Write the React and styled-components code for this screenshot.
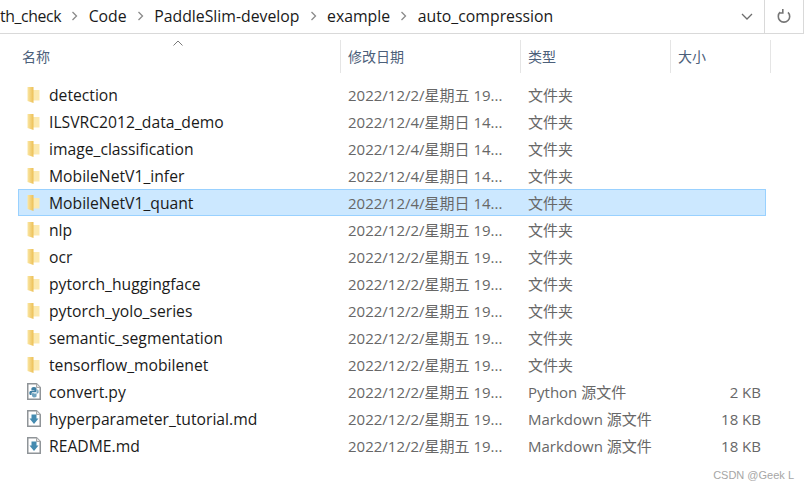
import React from 'react';
import styled, { createGlobalStyle } from 'styled-components';

const GlobalStyle = createGlobalStyle`
  html, body { margin: 0; padding: 0; background: #fff; }
  body { width: 808px; height: 488px; overflow: hidden; font-family: "Open Sans", "Noto Sans CJK SC", sans-serif; }
`;

const Page = styled.div`
  position: relative;
  width: 808px;
  height: 488px;
  background: #fff;
  overflow: hidden;
`;

const AddressBar = styled.div`
  display: flex;
  align-items: stretch;
  width: 804px;
  height: 34px;
  box-sizing: border-box;
  border-bottom: 1px solid #d9d9d9;
  border-right: 1px solid #d9d9d9;
`;

const Crumbs = styled.div`
  flex: 1;
  display: flex;
  align-items: center;
  overflow: hidden;
  padding-bottom: 2px;
  font-size: 15.8px;
  color: #1a1a1a;
  white-space: nowrap;
`;

const Crumb = styled.span`
  &:first-child { letter-spacing: -0.4px; }
`;

const CrumbArrow = styled.svg`
  flex: none;
  width: 7px;
  height: 10px;
  margin: 0 10.3px;
  fill: none;
  stroke: #8a8a8a;
  stroke-width: 1.3;
`;

const DropButton = styled.div`
  width: 39px;
  padding-left: 4px;
  box-sizing: border-box;
  display: flex;
  align-items: center;
  justify-content: center;
  svg { width: 12px; height: 7px; fill: none; stroke: #6d6d6d; stroke-width: 1.3; }
`;

const RefreshButton = styled.div`
  width: 38px;
  padding-bottom: 2px;
  display: flex;
  align-items: center;
  justify-content: center;
  border-left: 1px solid #d9d9d9;
  svg { width: 16px; height: 16px; fill: none; stroke: #757575; stroke-width: 1.6; }
`;

const HeaderRow = styled.div`
  position: relative;
  display: grid;
  grid-template-columns: 323px 180px 150px 100px;
  margin: 6px 0 0 18px;
  width: 753px;
  height: 33px;
`;

const HeaderCell = styled.div`
  display: flex;
  align-items: center;
  padding: 0 0 1px ${p => p.$pad || 7}px;
  box-sizing: border-box;
  border-right: 1px solid #e5e5e5;
  font-size: 14px;
  color: #4c607a;
`;

const SortArrow = styled.svg`
  position: absolute;
  left: 154px;
  top: 0;
  width: 12px;
  height: 6px;
  fill: none;
  stroke: #7a7a7a;
  stroke-width: 1;
`;

const List = styled.div`
  margin: 8px 0 0 18px;
  width: 748px;
`;

const Row = styled.div`
  display: grid;
  grid-template-columns: 323px 180px 150px 1fr;
  align-items: center;
  height: 27px;
  box-sizing: border-box;
  font-size: 15px;
  background: ${p => (p.$selected ? '#cce8ff' : 'transparent')};
  box-shadow: ${p => (p.$selected ? 'inset 0 0 0 1px #99d1ff' : 'none')};
`;

const NameCell = styled.div`
  display: flex;
  align-items: center;
  gap: 9px;
  padding-left: 9px;
  font-size: 15.7px;
  color: #1a1a1a;
`;

const InfoCell = styled.div`
  padding-left: 7px;
  color: #676767;
  white-space: nowrap;
`;

const SizeCell = styled.div`
  padding-right: 5px;
  text-align: right;
  color: #676767;
  white-space: nowrap;
`;

const Watermark = styled.div`
  position: absolute;
  right: 14px;
  bottom: 7px;
  font-family: "Liberation Sans", sans-serif;
  font-size: 11px;
  color: #a6a6a6;
`;

const FileSvg = styled.svg`
  margin-right: -1px;
`;

const FolderIcon = () => (
  <svg width="13" height="18" viewBox="0 0 13 18">
    <defs>
      <linearGradient id="flap" x1="0" x2="1" y1="0" y2="0">
        <stop offset="0" stopColor="#fbe6a2" />
        <stop offset="1" stopColor="#ecbf55" />
      </linearGradient>
    </defs>
    <path d="M5 4 L12.5 4 L12.5 14.5 L5 14.5 Z" fill="#fce9ae" />
    <path d="M0.5 1 L6.5 1 L6.5 17 L0.5 15 Z" fill="url(#flap)" />
  </svg>
);

const FileIcon = ({ kind }) => (
  <FileSvg width="14" height="17" viewBox="0 0 14 17">
    <path d="M0.75 0.75 H9.5 L13.25 4.5 V16.25 H0.75 Z" fill="#fff" stroke="#8f9498" strokeWidth="1.5" />
    <path d="M9.5 0.75 V4.5 H13.25" fill="#e4e4e4" stroke="#a8a8a8" />
    {kind === 'py' ? (
      <>
        <path d="M7 4 C4.6 4 4.4 5 4.4 6 V7.4 H7.4 V8 H3.4 C2 8 2 12 3.4 12 H4.6 V10.4 C4.6 9.6 5.2 9.2 6 9.2 H8.4 C9.2 9.2 9.6 8.8 9.6 8 V6 C9.6 4.8 8.6 4 7 4 Z" fill="#3f7fa3" />
        <path d="M7 14.4 C9.4 14.4 9.6 13.4 9.6 12.4 V11 H6.6 V10.4 H10.6 C12 10.4 12 6.4 10.6 6.4 H10.2 V8.2 C10.2 9.2 9.4 9.9 8.6 9.9 H6 C5.4 9.9 5 10.3 5 11 V12.6 C5 13.7 5.8 14.4 7 14.4 Z" fill="#6fa3bf" />
      </>
    ) : (
      <path d="M4.5 4.5 H9.5 V8.5 H11.5 L7 14 L2.5 8.5 H4.5 Z" fill="#458bb0" />
    )}
  </FileSvg>
);

const columns = ['名称', '修改日期', '类型', '大小'];
const crumbs = ['th_check', 'Code', 'PaddleSlim-develop', 'example', 'auto_compression'];

const d2Fri = '2022/12/2/星期五 19...';
const d4Sun = '2022/12/4/星期日 14...';

const files = [
  { name: 'detection', date: d2Fri, type: '文件夹' },
  { name: 'ILSVRC2012_data_demo', date: d4Sun, type: '文件夹' },
  { name: 'image_classification', date: d4Sun, type: '文件夹' },
  { name: 'MobileNetV1_infer', date: d4Sun, type: '文件夹' },
  { name: 'MobileNetV1_quant', date: d4Sun, type: '文件夹', selected: true },
  { name: 'nlp', date: d2Fri, type: '文件夹' },
  { name: 'ocr', date: d2Fri, type: '文件夹' },
  { name: 'pytorch_huggingface', date: d2Fri, type: '文件夹' },
  { name: 'pytorch_yolo_series', date: d2Fri, type: '文件夹' },
  { name: 'semantic_segmentation', date: d2Fri, type: '文件夹' },
  { name: 'tensorflow_mobilenet', date: d2Fri, type: '文件夹' },
  { name: 'convert.py', date: d2Fri, type: 'Python 源文件', size: '2 KB', icon: 'py' },
  { name: 'hyperparameter_tutorial.md', date: d2Fri, type: 'Markdown 源文件', size: '18 KB', icon: 'md' },
  { name: 'README.md', date: d2Fri, type: 'Markdown 源文件', size: '18 KB', icon: 'md' },
];

export default function App() {
  return (
    <Page>
      <GlobalStyle />
      <AddressBar>
        <Crumbs>
          {crumbs.map((c, i) => (
            <React.Fragment key={c}>
              {i > 0 && (
                <CrumbArrow viewBox="0 0 7 10"><path d="M1.5 1 L5.5 5 L1.5 9" /></CrumbArrow>
              )}
              <Crumb>{c}</Crumb>
            </React.Fragment>
          ))}
        </Crumbs>
        <DropButton>
          <svg viewBox="0 0 12 7"><path d="M1 1 L6 6 L11 1" /></svg>
        </DropButton>
        <RefreshButton>
          <svg viewBox="0 0 16 16"><path d="M12 4.4 A5.7 5.7 0 1 1 4.2 4.2 M6.8 1 V5 H2.8" /></svg>
        </RefreshButton>
      </AddressBar>
      <HeaderRow>
        <SortArrow viewBox="0 0 12 6"><path d="M1.5 5.5 L6 1 L10.5 5.5" /></SortArrow>
        {columns.map((c, i) => (
          <HeaderCell key={c} $pad={i === 0 ? 4 : 7}>{c}</HeaderCell>
        ))}
      </HeaderRow>
      <List>
        {files.map(f => (
          <Row key={f.name} $selected={f.selected}>
            <NameCell>
              {f.icon ? <FileIcon kind={f.icon} /> : <FolderIcon />}
              {f.name}
            </NameCell>
            <InfoCell>{f.date}</InfoCell>
            <InfoCell>{f.type}</InfoCell>
            <SizeCell>{f.size}</SizeCell>
          </Row>
        ))}
      </List>
      <Watermark>CSDN @Geek L</Watermark>
    </Page>
  );
}
